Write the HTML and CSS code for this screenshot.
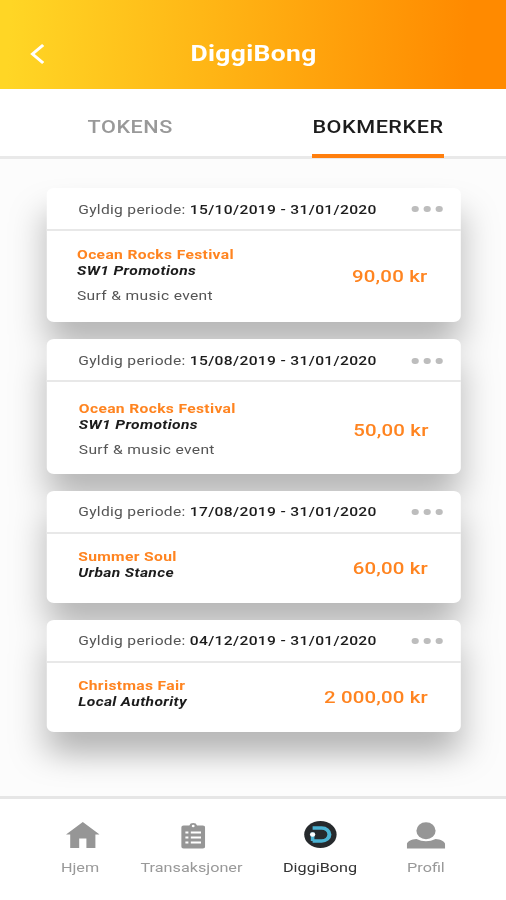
FILE: index.html
```html
<!DOCTYPE html>
<html lang="no">
<head>
  <meta charset="UTF-8">
  <meta name="viewport" content="width=device-width, initial-scale=1.0">
  <title>DiggiBong</title>
  <link rel="stylesheet" href="styles.css">
</head>
<body>
  <div class="app">
    <header class="header">
      <svg class="back" viewBox="0 0 12 20" width="12" height="20"><path d="M11 1 L2 10 L11 19" fill="none" stroke="#fff" stroke-width="2.6"/></svg>
      <h1>DiggiBong</h1>
    </header>

    <nav class="tabs">
      <a class="tab">TOKENS</a>
      <a class="tab active">BOKMERKER</a>
    </nav>

    <main class="cards">
      <section class="card">
        <div class="card-header">
          <p>Gyldig periode: <b>15/10/2019 - 31/01/2020</b></p>
          <div class="dots"><i></i><i></i><i></i></div>
        </div>
        <div class="card-body">
          <div class="info">
            <h2>Ocean Rocks Festival</h2>
            <h3>SW1 Promotions</h3>
            <p>Surf &amp; music event</p>
          </div>
          <span class="price">90,00 kr</span>
        </div>
      </section>

      <section class="card second">
        <div class="card-header">
          <p>Gyldig periode: <b>15/08/2019 - 31/01/2020</b></p>
          <div class="dots"><i></i><i></i><i></i></div>
        </div>
        <div class="card-body">
          <div class="info">
            <h2>Ocean Rocks Festival</h2>
            <h3>SW1 Promotions</h3>
            <p>Surf &amp; music event</p>
          </div>
          <span class="price">50,00 kr</span>
        </div>
      </section>

      <section class="card small">
        <div class="card-header">
          <p>Gyldig periode: <b>17/08/2019 - 31/01/2020</b></p>
          <div class="dots"><i></i><i></i><i></i></div>
        </div>
        <div class="card-body">
          <div class="info">
            <h2>Summer Soul</h2>
            <h3>Urban Stance</h3>
          </div>
          <span class="price">60,00 kr</span>
        </div>
      </section>

      <section class="card small">
        <div class="card-header">
          <p>Gyldig periode: <b>04/12/2019 - 31/01/2020</b></p>
          <div class="dots"><i></i><i></i><i></i></div>
        </div>
        <div class="card-body">
          <div class="info">
            <h2>Christmas Fair</h2>
            <h3>Local Authority</h3>
          </div>
          <span class="price">2 000,00 kr</span>
        </div>
      </section>
    </main>

    <nav class="bottom-nav">
      <a class="nav-item">
        <svg class="home" viewBox="0 0 28 28" width="28" height="28"><path d="M14 1 L28 13.5 H24.5 V27 H17 V17.5 H11 V27 H3.5 V13.5 H0 Z" fill="#969696"/></svg>
        <span>Hjem</span>
      </a>
      <a class="nav-item">
        <svg class="list" viewBox="0 0 20 28" width="20" height="28">
          <path d="M2 4.500 H6.800 A3.300 3.300 0 0 1 13.200 4.500 H18 A2 2 0 0 1 20 6.500 V25.500 A2 2 0 0 1 18 27.500 H2 A2 2 0 0 1 0 25.500 V6.500 A2 2 0 0 1 2 4.500 Z" fill="#969696"/>
          <circle cx="10" cy="5" r="1.200" fill="#fff"/>
          <path d="M3.500 11.500 h2.500 M3.500 16.500 h2.500 M3.500 21.500 h2.500 M8 11.500 h8.500 M8 16.500 h8.500 M8 21.500 h8.500" stroke="#fff" stroke-width="2.200"/>
        </svg>
        <span>Transaksjoner</span>
      </a>
      <a class="nav-item active">
        <svg viewBox="0 0 28 28" width="28" height="28">
          <circle cx="14" cy="13.500" r="13.500" fill="#262a2d"/>
          <path d="M7.500 7 H15 A6.500 6.500 0 0 1 15 20 H7.500" fill="none" stroke="#4bb3d3" stroke-width="3.400"/>
          <path d="M7.500 11.500 V20" stroke="#4bb3d3" stroke-width="3"/>
          <circle cx="7.500" cy="13.500" r="2.200" fill="#fff"/>
        </svg>
        <span>DiggiBong</span>
      </a>
      <a class="nav-item">
        <svg viewBox="0 0 32 28" width="32" height="28">
          <ellipse cx="16" cy="9.700" rx="8" ry="8.500" fill="#969696"/>
          <path d="M0 27.500 V24 C0 20 4 18.500 8 18 Q16 22.500 24 18 C28 18.500 32 20 32 24 V27.500 Z" fill="#969696"/>
        </svg>
        <span>Profil</span>
      </a>
    </nav>
  </div>
</body>
</html>
```

FILE: styles.css
```css
* {
  box-sizing: border-box;
}
body {
  margin: 0;
  overflow: hidden;
  background: #fcfcfc;
  font-family: Roboto, Arial, sans-serif;
}
h1, h2, h3, p {
  margin: 0;
}
/* the interface is drawn wide: 1.2 times its layout width */
.app {
  display: flex;
  flex-direction: column;
  width: 421.67px;
  height: 900px;
  transform: scaleX(1.2);
  transform-origin: 0 0;
}
.header {
  display: grid;
  grid-template-columns: 60px 1fr 60px;
  align-items: center;
  height: 89px;
  padding-top: 18px;
  background: linear-gradient(92deg, #ffd625 2%, #ffb515 42%, #ff8a00 92%);
}
.back {
  margin-left: 24.5px;
}
.header h1 {
  color: #fff;
  font-size: 22px;
  font-weight: 700;
  letter-spacing: 0.3px;
  line-height: 26px;
  text-align: center;
  text-indent: 1px;
}
.tabs {
  display: flex;
  justify-content: space-between;
  height: 70px;
  padding: 0 52px 0 73px;
  background: #fff;
  border-bottom: 3px solid #e9e9e9;
}
.tab {
  height: 69px;
  color: #999;
  font-size: 18px;
  font-weight: 500;
  letter-spacing: 0.45px;
  line-height: 76px;
}
.tab.active {
  color: #1c1c1c;
  border-bottom: 4px solid #ff7f0e;
}
.cards {
  display: flex;
  flex: 1;
  flex-direction: column;
  gap: 17px;
  padding: 28.5px 37.5px 0 39.2px;
  filter: drop-shadow(0 23px 15px rgba(0, 0, 0, 0.28));
}
.card {
  height: 134.5px;
  background: #fff;
  border-radius: 6px;
}
.card.small {
  height: 112px;
}
.card-header {
  display: flex;
  justify-content: space-between;
  align-items: center;
  height: 43px;
  padding: 2px 15.5px 0 26px;
  border-bottom: 2px solid #e8e8e8;
  color: #555;
  font-size: 13px;
  letter-spacing: 0.25px;
}
.small .card-header {
  padding-top: 1px;
}
.card-header b {
  color: #1c1c1c;
  font-weight: 500;
  letter-spacing: 0.28px;
}
.dots {
  display: flex;
  gap: 4.5px;
}
.dots i {
  width: 5.5px;
  height: 6px;
  border-radius: 50%;
  background: #bdbdbd;
}
.card-body {
  display: flex;
  justify-content: space-between;
  padding: 16px 28px 0 25px;
}
.info h2,
.info h3 {
  font-size: 13px;
  font-weight: 700;
  letter-spacing: 0.29px;
  line-height: 16px;
}
.info h2 {
  color: #ff8420;
}
.info h3 {
  color: #1c1c1c;
  font-style: italic;
}
.info p {
  margin-top: 9px;
  color: #555;
  font-size: 13px;
  letter-spacing: 0.28px;
  line-height: 16px;
}
.price {
  margin-top: 19px;
  color: #ff8420;
  font-size: 17px;
  font-weight: 500;
  letter-spacing: 0.15px;
  line-height: 20px;
}
.second .card-body {
  padding: 19px 27px 0 26.5px;
}
.small .card-body {
  padding: 15.5px 27.5px 0 26px;
}
.small .price {
  margin-top: 9px;
}
.bottom-nav {
  display: grid;
  grid-template-columns: 93.4px 92.4px 121.8px 54.8px;
  height: 104px;
  padding: 21.5px 0 0 20px;
  background: #fff;
  border-top: 3px solid #e6e6e6;
}
.nav-item {
  display: flex;
  flex-direction: column;
  align-items: center;
  gap: 9px;
  color: #999;
  font-size: 13.5px;
  line-height: 18px;
}
.nav-item.active {
  color: #333;
}
.home {
  margin-left: 4px;
}
.list {
  margin-left: 2px;
}
```
